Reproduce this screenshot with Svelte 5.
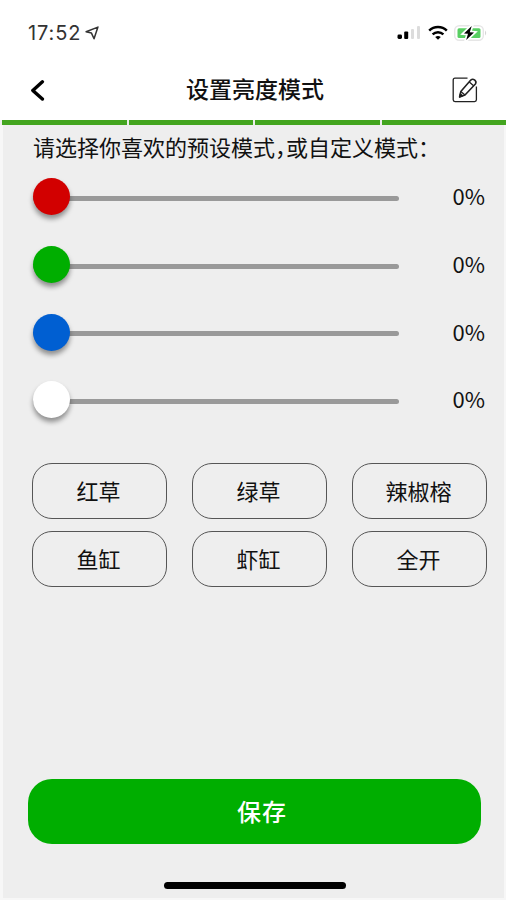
<script lang="ts">
  interface Channel {
    name: string;
    color: string;
    value: number;
  }

  let channels = $state<Channel[]>([
    { name: '红', color: '#d20000', value: 0 },
    { name: '绿', color: '#00ae00', value: 0 },
    { name: '蓝', color: '#005fd2', value: 0 },
    { name: '白', color: '#ffffff', value: 0 },
  ]);

  const presets = ['红草', '绿草', '辣椒榕', '鱼缸', '虾缸', '全开'];
  const segments = [0, 1, 2, 3];

  function step(channel: Channel, event: KeyboardEvent): void {
    if (event.key === 'ArrowRight') channel.value = Math.min(100, channel.value + 1);
    if (event.key === 'ArrowLeft') channel.value = Math.max(0, channel.value - 1);
  }
</script>

<div class="screen">
  <header class="top">
    <div class="status">
      <div class="status__left">
        <span class="status__time">17:52</span>
        <svg width="14" height="14" viewBox="0 0 13 13" fill="none">
          <path d="M12 1 L1 5.4 L6 6.6 L8.4 11.8 Z" stroke="#333" stroke-width="1.4" stroke-linejoin="round" />
        </svg>
      </div>
      <div class="status__right">
        <svg width="24" height="16" viewBox="0 0 24 16">
          <rect x="0.5" y="9.5" width="4.5" height="4.5" rx="1.4" />
          <rect x="7.2" y="6.5" width="4" height="7.5" rx="1" />
          <rect x="14" y="4" width="3" height="10" rx="1" fill="#dcdcdc" />
          <rect x="20" y="1" width="3" height="13" rx="1" fill="#dcdcdc" />
        </svg>
        <svg class="status__wifi" width="20" height="16" viewBox="0 0 20 16" fill="none" stroke="#000">
          <path d="M1.2 5.6 C6 0.9 14 0.9 18.8 5.6" stroke-width="2.5" />
          <path d="M4.6 9.4 C7.6 6.5 12.4 6.5 15.4 9.4" stroke-width="2.4" />
          <path d="M10 14.8 L7.2 12.1 Q10 9.9 12.8 12.1 Z" fill="#000" stroke="none" />
        </svg>
        <svg class="status__battery" width="34" height="18" viewBox="0 0 34 18">
          <rect x="0.7" y="1.7" width="28.6" height="14.6" rx="4.5" fill="#fff" stroke="#e6e6e6" stroke-width="1.4" />
          <path d="M31 6.5 Q33.4 9 31 11.5 Z" fill="#d6d6d6" />
          <rect x="3.5" y="4.3" width="23" height="9.6" rx="1.5" fill="#58cf62" />
          <path d="M17.7 2 L10 9.4 L14 9.8 L12.2 16 L20 8.6 L15.8 8.2 Z" stroke="#fff" stroke-width="3.4" />
          <path d="M17.7 2 L10 9.4 L14 9.8 L12.2 16 L20 8.6 L15.8 8.2 Z" />
        </svg>
      </div>
    </div>

    <nav class="nav">
      <button type="button" class="nav__button" aria-label="返回">
        <svg width="15" height="22" viewBox="0 0 15 22" fill="none">
          <path d="M12.4 2.8 L2.8 11.4 L12.4 20" stroke="#000" stroke-width="3.4" stroke-linecap="round" stroke-linejoin="round" />
        </svg>
      </button>
      <h1 class="nav__title">设置亮度模式</h1>
      <button type="button" class="nav__button" aria-label="编辑">
        <svg width="26" height="26" viewBox="0 0 26 26" fill="none" stroke="#222" stroke-width="1.3" stroke-linejoin="round">
          <path d="M15.5 1.2 H3 Q1.2 1.2 1.2 3 V22.8 Q1.2 24.6 3 24.6 H22.6 Q24.4 24.6 24.4 22.8 V9.5" />
          <path d="M7.6 20 L8.8 14.6 L18.8 3.1 Q20.6 1.4 22.8 3.2 Q24.8 5 23.4 7 L13 18 Z" stroke-width="1.6" />
          <path d="M17.3 5 L21.6 8.8 M8.8 14.6 L13 18" />
          <path d="M7.6 20 L8.3 16.8 L10.6 18.8 Z" fill="#000" />
        </svg>
      </button>
    </nav>
  </header>

  <div class="segments">
    {#each segments as segment (segment)}
      <span class="segments__item"></span>
    {/each}
  </div>

  <main class="content">
    <p class="hint" lang="zh-CN">请选择你喜欢的预设模式&#xFF0C;或自定义模式&#xFF1A;</p>

    <div class="channels">
      {#each channels as channel (channel.name)}
        <div class="channel">
          <div class="channel__slider">
            <div class="channel__track"></div>
            <div
              class="channel__knob"
              role="slider"
              tabindex="0"
              aria-label={channel.name}
              aria-valuemin="0"
              aria-valuemax="100"
              aria-valuenow={channel.value}
              style="background: {channel.color}; left: {channel.value * 3.3}px"
              onkeydown={(event) => step(channel, event)}
            ></div>
          </div>
          <span class="channel__value">{channel.value}%</span>
        </div>
      {/each}
    </div>

    <div class="presets">
      {#each presets as preset (preset)}
        <button type="button" class="presets__button">{preset}</button>
      {/each}
    </div>

    <button type="button" class="save">保存</button>
    <div class="home-bar"></div>
  </main>
</div>

<style>
  :global(body) {
    margin: 0;
    background: #fff;
  }

  .screen {
    display: flex;
    flex-direction: column;
    box-sizing: border-box;
    width: 506px;
    height: 900px;
    font-family: 'Noto Sans CJK SC', sans-serif;
    color: #111;
    overflow: hidden;
  }

  button {
    appearance: none;
    margin: 0;
    padding: 0;
    border: none;
    background: none;
    color: inherit;
    font-family: inherit;
    cursor: pointer;
  }

  svg {
    display: block;
  }

  .top {
    height: 120px;
    flex: none;
    background: #fff;
  }

  .status {
    display: flex;
    align-items: center;
    justify-content: space-between;
    height: 66px;
    padding: 0 18px 0 28px;
  }

  .status__left,
  .status__right {
    display: flex;
    align-items: center;
  }

  .status__left {
    gap: 4px;
  }

  .status__time {
    font-family: Inter, sans-serif;
    font-size: 20px;
    line-height: 24px;
    letter-spacing: 0.9px;
    color: #333;
  }

  .status__wifi {
    margin-left: 7px;
  }

  .status__battery {
    margin-left: 6px;
  }

  .nav {
    display: flex;
    align-items: center;
    justify-content: space-between;
    height: 48px;
    padding: 0 28px 0 30px;
  }

  .nav__title {
    margin: 0 0 4px 13px;
    font-size: 23px;
    line-height: 34px;
    font-weight: 500;
  }

  .segments {
    display: flex;
    flex: none;
    gap: 2px;
    height: 5px;
    padding-left: 2px;
    background: #eee;
  }

  .segments__item {
    flex: 1;
    background: #43a51f;
  }

  .content {
    display: flex;
    flex-direction: column;
    flex: 1;
    border: solid #f7f7f7;
    border-width: 0 2px 2px 3px;
    background: #eee;
  }

  .hint {
    margin: 5px 0 1px 30px;
    font-size: 22px;
    line-height: 32px;
    white-space: nowrap;
    font-feature-settings: 'halt';
  }

  .channels {
    display: flex;
    flex-direction: column;
  }

  .channel {
    display: flex;
    align-items: center;
    justify-content: space-between;
    height: 67.7px;
    padding: 0 19px 0 30px;
  }

  .channel__slider {
    position: relative;
    display: flex;
    align-items: center;
    width: 366px;
    height: 37px;
  }

  .channel__track {
    width: 100%;
    height: 5px;
    margin-top: 3px;
    border-radius: 3px;
    background: #999;
  }

  .channel__knob {
    position: absolute;
    top: 0;
    width: 37px;
    height: 37px;
    border-radius: 50%;
    box-shadow: 0 4px 5px rgba(0, 0, 0, 0.4);
  }

  .channel__value {
    padding-bottom: 3px;
    font-size: 22px;
    line-height: 30px;
  }

  .presets {
    display: grid;
    grid-template-columns: repeat(3, 135px);
    gap: 12px 25px;
    margin: 29px 0 0 29px;
  }

  .presets__button {
    height: 56px;
    padding: 0 2px 2px 0;
    border: 1px solid #555;
    border-radius: 20px;
    font-size: 22px;
    line-height: 32px;
  }

  .save {
    height: 65px;
    margin: auto 23px 0 25px;
    padding: 0 0 3px 15px;
    border-radius: 24px;
    background: #00ae00;
    color: #fff;
    font-size: 24px;
    font-weight: 500;
    letter-spacing: 1px;
  }

  .home-bar {
    flex: none;
    width: 182px;
    height: 7px;
    margin: 38px 0 9px 161px;
    border-radius: 4px;
    background: #000;
  }
</style>
